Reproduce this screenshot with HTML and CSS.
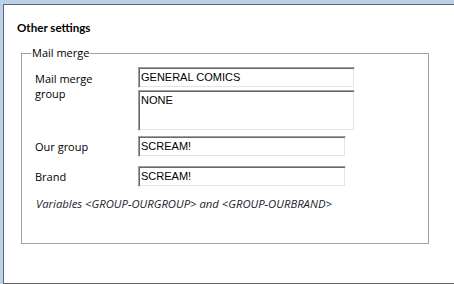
FILE: index.html
```html
<!DOCTYPE html>
<html lang="en">
<head>
    <meta charset="UTF-8">
    <title>Other settings</title>
    <link rel="stylesheet" href="styles.css">
</head>
<body>
    <div class="window">
        <h1 class="title">Other settings</h1>
        <fieldset class="group">
            <legend>Mail merge</legend>
            <div class="row row-merge">
                <label class="label">Mail merge<br>group</label>
                <div class="fields">
                    <div class="textbox wide">GENERAL COMICS</div>
                    <div class="textbox wide multi">NONE</div>
                </div>
            </div>
            <div class="row row-our">
                <label class="label">Our group</label>
                <div class="textbox">SCREAM!</div>
            </div>
            <div class="row row-brand">
                <label class="label">Brand</label>
                <div class="textbox">SCREAM!</div>
            </div>
            <p class="hint">Variables &lt;GROUP-OURGROUP&gt; and &lt;GROUP-OURBRAND&gt;</p>
        </fieldset>
    </div>
</body>
</html>
```

FILE: styles.css
```css
/* Page */
html, body {
    margin: 0;
    padding: 0;
}

body {
    background: #b9d1ea; /* desktop blue */
    height: 284px;
    overflow: hidden;
    font-family: 'Open Sans', sans-serif;
    color: #000000;
}

/* Window panel */
.window {
    margin: 4px 0 0 3px;
    height: 278px;
    background: #ffffff;
    border: 1px solid #646464;
    border-right: none;
}

.title {
    margin: 0;
    padding: 15px 0 0 13px;
    font-family: 'Lato', sans-serif;
    font-size: 11.6px;
    font-weight: bold;
    line-height: 16px;
}

/* Group box */
.group {
    box-sizing: border-box;
    width: 408px;
    height: 198px;
    margin: 10px 0 0 17px;
    padding: 7px 0 0 13px;
    border: 1px solid #a0a0a0;
    min-width: 0;
}

.group legend {
    padding: 0 1px;
    margin-left: -4px;
    font-size: 11px;
    line-height: 14px;
}

/* Rows */
.row {
    display: flex;
    align-items: center;
}

.row-merge {
    align-items: flex-start;
}

.row-our {
    margin-top: 5px;
}

.row-brand {
    margin-top: 9px;
}

.label {
    width: 103px;
    flex: none;
    font-size: 11px;
    line-height: 15px;
}

.row-merge .label {
    padding-top: 4px;
}

.fields {
    display: flex;
    flex-direction: column;
    gap: 2px;
}

/* Sunken text boxes */
.textbox {
    box-sizing: border-box;
    width: 208px;
    height: 21px;
    padding: 3px 0 0 2px;
    border: 1px solid;
    border-color: #a0a0a0 #ffffff #ffffff #a0a0a0;
    box-shadow: inset 1px 1px #696969, inset -1px -1px #e3e3e3;
    font-family: 'Liberation Sans', Arial, sans-serif;
    font-size: 11px;
    line-height: 13px;
    white-space: nowrap;
}

.textbox.wide {
    width: 217px;
}

.textbox.multi {
    height: 41px;
}

.hint {
    margin: 9px 0 0 1px;
    font-size: 11.3px;
    font-style: italic;
    line-height: 15px;
    color: #1c1c30;
}
```
